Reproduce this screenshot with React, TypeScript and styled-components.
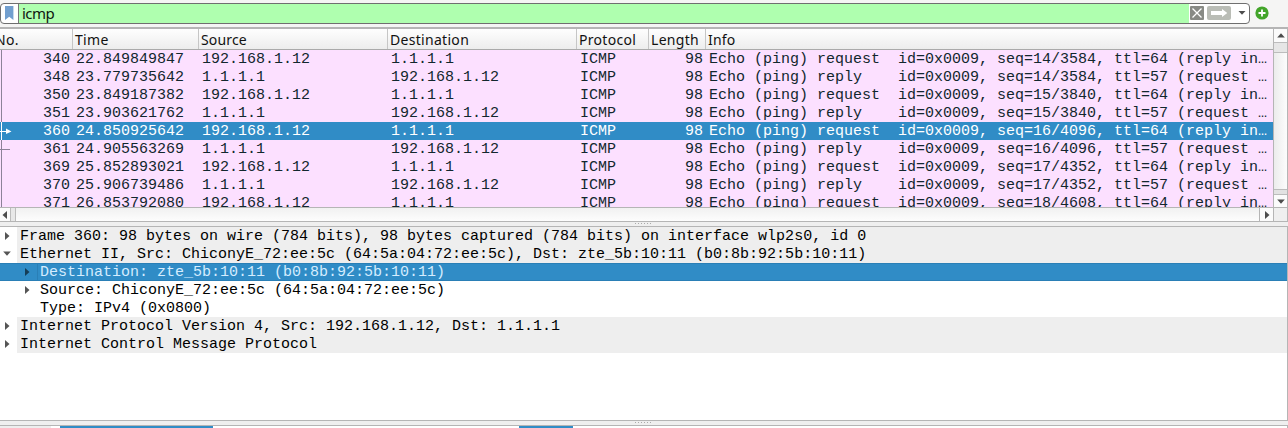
import React from "react";
import styled, { createGlobalStyle, css } from "styled-components";

const Global = createGlobalStyle`
  * { box-sizing: border-box; }
  html, body { margin: 0; padding: 0; overflow: hidden; background: #efefef; }
`;

const mono = css`
  font-family: "Liberation Mono", monospace;
  font-size: 15px;
  line-height: 20px;
  white-space: pre;
`;

const Window = styled.div`
  width: 1288px;
  height: 428px;
  display: flex;
  flex-direction: column;
  overflow: hidden;
  background: #efefef;
`;

const FilterBar = styled.div`
  display: flex;
  flex: none;
  height: 27px;
  padding-top: 3px;
  background: #f5f5f4;
`;

const FilterField = styled.div`
  display: flex;
  width: 1250px;
  height: 21px;
  border: 1px solid #6f6f6f;
  border-radius: 4px;
  background: #fff;
  overflow: hidden;
`;

const Bookmark = styled.div`
  width: 18px;
  border-right: 1px solid #777;
  padding: 2px 0 0 4px;
  line-height: 0;
`;

const FilterText = styled.div`
  flex: 1;
  background: #afffaf;
  padding-left: 3px;
  font: 15px/19px "Noto Sans", sans-serif;
  letter-spacing: -0.55px;
  color: #101810;
`;

const FieldActions = styled.div`
  display: flex;
  width: 60px;
  padding-top: 2px;
`;

const AddButton = styled.div`
  padding: 3px 0 0 5px;
  line-height: 0;
`;

const PacketPane = styled.div`
  display: flex;
  flex-direction: column;
  flex: none;
  height: 195px;
  border-top: 2px solid #b5b5b5;
  border-right: 1px solid #b5b5b5;
  border-bottom: 1px solid #b5b5b5;
`;

const PacketBody = styled.div`
  display: flex;
  height: 178px;
`;

const PacketTable = styled.div`
  display: flex;
  flex-direction: column;
  width: 1273px;
  overflow: hidden;
`;

const columns = "73px 126px 189px 189px 72px 57px 567px";

const HeaderRow = styled.div`
  display: grid;
  flex: none;
  grid-template-columns: ${columns};
  height: 21px;
  background: linear-gradient(#fefefe, #ededed);
  border-bottom: 1px solid #aaa;
`;

const HeaderCell = styled.div<{ $shift?: number; $spacing?: number; $last?: boolean }>`
  padding-left: 2px;
  text-indent: ${(p) => p.$shift ?? 0}px;
  letter-spacing: ${(p) => p.$spacing ?? 0.3}px;
  border-right: ${(p) => (p.$last ? "0" : "1px solid #c6c6c6")};
  font: 14px/21px "Noto Sans", sans-serif;
  color: #111;
  white-space: nowrap;
  overflow: hidden;
`;

const Rows = styled.div`
  height: 157px;
  overflow: hidden;
`;

const PacketRow = styled.div<{ $selected: boolean }>`
  ${mono}
  position: relative;
  display: grid;
  grid-template-columns: ${columns};
  height: 18px;
  color: ${(p) => (p.$selected ? "#fff" : "#12272e")};
  background: ${(p) => (p.$selected ? "#308cc6" : "#fce0ff")};
`;

const Cell = styled.div<{ $right?: boolean }>`
  height: 18px;
  padding: 0 3px;
  text-align: ${(p) => (p.$right ? "right" : "left")};
`;

const Relation = styled.svg`
  position: absolute;
  left: 0;
  top: 0;
`;

const VerticalScroll = styled.div`
  display: flex;
  flex-direction: column;
  width: 14px;
  border-left: 1px solid #b5b5b5;
  background: linear-gradient(90deg, #ececec, #fcfcfc);
`;

const StepButton = styled.div<{ $w: number; $h: number }>`
  display: flex;
  flex: none;
  align-items: center;
  justify-content: center;
  width: ${(p) => p.$w}px;
  height: ${(p) => p.$h}px;
  background: #fbfbfb;
`;

const Thumb = styled.div`
  height: 11px;
  border: solid #bcbcbc;
  border-width: 1px 0;
  background: #e6e6e6;
`;

const Track = styled.div`
  flex: 1;
`;

const TrackEnd = styled.div`
  height: 6px;
  border: solid #bcbcbc;
  border-width: 1px 0;
  background: #e2e2e2;
`;

const HorizontalScroll = styled.div`
  display: flex;
  height: 14px;
  border-top: 1px solid #b5b5b5;
  background: linear-gradient(#f1f1f1, #fdfdfd);
`;

const HorizontalThumb = styled.div`
  width: 6px;
  border: solid #bcbcbc;
  border-width: 0 1px;
  background: #e8e8e8;
`;

const Corner = styled.div`
  width: 14px;
  border-left: 1px solid #b5b5b5;
  background: #efefef;
`;

const RightStep = styled.div`
  display: flex;
  border-left: 1px solid #b5b5b5;
`;

const Splitter = styled.div`
  display: flex;
  flex: none;
  justify-content: center;
  gap: 2px;
  height: 4px;
  padding: 1px 2px 0 0;
  background: #efefef;
`;

const Dot = styled.i`
  width: 1px;
  height: 1px;
  background: #aaa;
`;

const DetailPane = styled.div`
  flex: none;
  height: 195px;
  border: solid #b5b5b5;
  border-width: 1px 1px 1px 0;
  background: #fff;
`;

const DetailRow = styled.div<{ $selected?: boolean }>`
  ${mono}
  display: flex;
  height: 18px;
  color: ${(p) => (p.$selected ? "#d5edff" : "#000")};
  background: ${(p) => (p.$selected ? "#308cc6" : "#fff")};
  box-shadow: ${(p) => (p.$selected ? "inset 0 1px #2a7fb6, inset 0 -1px #2a7fb6" : "none")};
`;

const Twisty = styled.div<{ $depth: number; $open?: boolean }>`
  width: ${(p) => 17 + p.$depth * 20}px;
  padding: ${(p) => (p.$open ? 4 : 5)}px 0 0 ${(p) => p.$depth * 20 + 3}px;
  line-height: 0;
`;

const DetailText = styled.div<{ $shade?: boolean; $selected?: boolean }>`
  flex: 1;
  padding-left: ${(p) => (p.$selected ? 2 : 3)}px;
  background: ${(p) => (p.$shade ? "#eee" : "transparent")};
  border-left: ${(p) => (p.$selected ? "1px solid #2a7fb6" : "0")};
`;

const BytesPane = styled.div`
  display: flex;
  flex: none;
  height: 3px;
  border-top: 1px solid #b5b5b5;
  border-right: 1px solid #b5b5b5;
  background: #fff;
`;

const ByteSpan = styled.div<{ $w: number; $color?: string }>`
  width: ${(p) => p.$w}px;
  background: ${(p) => p.$color ?? "transparent"};
`;

type Direction = "up" | "down" | "left" | "right";
const triangles: Record<Direction, string> = {
  up: "M0.2 5.5L4 1.2L7.8 5.5Z",
  down: "M0.2 2.5L4 6.8L7.8 2.5Z",
  left: "M6 0L1.5 4L6 8Z",
  right: "M2 0L6.5 4L2 8Z",
};
const Triangle = ({ dir, color = "#4c4c4c" }: { dir: Direction; color?: string }) => (
  <svg width="8" height="8" viewBox="0 0 8 8">
    <path d={triangles[dir]} fill={color} />
  </svg>
);

const Grip = () => (
  <Splitter>
    {[0, 1, 2, 3, 4, 5].map((i) => (
      <Dot key={i} />
    ))}
  </Splitter>
);

const packets: [number, string, boolean, string][] = [
  [340, "22.849849847", true, "14/3584"],
  [348, "23.779735642", false, "14/3584"],
  [350, "23.849187382", true, "15/3840"],
  [351, "23.903621762", false, "15/3840"],
  [360, "24.850925642", true, "16/4096"],
  [361, "24.905563269", false, "16/4096"],
  [369, "25.852893021", true, "17/4352"],
  [370, "25.906739486", false, "17/4352"],
  [371, "26.853792080", true, "18/4608"],
];

const details: { text: string; depth: number; open?: boolean; leaf?: boolean; selected?: boolean }[] = [
  { text: "Frame 360: 98 bytes on wire (784 bits), 98 bytes captured (784 bits) on interface wlp2s0, id 0", depth: 0 },
  { text: "Ethernet II, Src: ChiconyE_72:ee:5c (64:5a:04:72:ee:5c), Dst: zte_5b:10:11 (b0:8b:92:5b:10:11)", depth: 0, open: true },
  { text: "Destination: zte_5b:10:11 (b0:8b:92:5b:10:11)", depth: 1, selected: true },
  { text: "Source: ChiconyE_72:ee:5c (64:5a:04:72:ee:5c)", depth: 1 },
  { text: "Type: IPv4 (0x0800)", depth: 1, leaf: true },
  { text: "Internet Protocol Version 4, Src: 192.168.1.12, Dst: 1.1.1.1", depth: 0 },
  { text: "Internet Control Message Protocol", depth: 0 },
];

export default function App() {
  return (
    <Window>
      <Global />
      <FilterBar>
        <FilterField>
          <Bookmark>
            <svg width="9" height="15" viewBox="0 0 9 15">
              <path d="M0 0H8.4V14L4.2 10.7L0 14Z" fill="#729fcf" />
            </svg>
          </Bookmark>
          <FilterText>icmp</FilterText>
          <FieldActions>
            <svg width="58" height="15" viewBox="0 0 58 15">
              <rect x="1" y="0" width="14" height="14" rx="1" fill="#888a85" />
              <path d="M3.5 2.5L12.5 11.5M12.5 2.5L3.5 11.5" stroke="#fff" strokeWidth="1.3" />
              <rect x="18" y="0" width="24" height="14" rx="2" fill="#babdb6" />
              <path d="M22 5H33V3L38.3 7L33 11V9H22Z" fill="#fff" />
              <path d="M49.5 5H56.5L53 8.8Z" fill="#4c4c4c" />
            </svg>
          </FieldActions>
        </FilterField>
        <AddButton>
          <svg width="14" height="14" viewBox="0 0 14 14">
            <circle cx="7" cy="7" r="6.6" fill="#43a52a" />
            <path d="M7 3.5V10.5M3.5 7H10.5" stroke="#fff" strokeWidth="1.8" />
          </svg>
        </AddButton>
      </FilterBar>

      <PacketPane>
        <PacketBody>
          <PacketTable>
            <HeaderRow>
              <HeaderCell $shift={-7}>No.</HeaderCell>
              <HeaderCell>Time</HeaderCell>
              <HeaderCell $spacing={0.15}>Source</HeaderCell>
              <HeaderCell>Destination</HeaderCell>
              <HeaderCell>Protocol</HeaderCell>
              <HeaderCell>Length</HeaderCell>
              <HeaderCell $spacing={0.15} $last>
                Info
              </HeaderCell>
            </HeaderRow>
            <Rows>
              {packets.map(([no, time, request, seq]) => {
                const selected = no === 360;
                const line = selected ? "#fff" : "#8c8298";
                return (
                  <PacketRow key={no} $selected={selected}>
                    <Cell $right>{no}</Cell>
                    <Cell>{time}</Cell>
                    <Cell>{request ? "192.168.1.12" : "1.1.1.1"}</Cell>
                    <Cell>{request ? "1.1.1.1" : "192.168.1.12"}</Cell>
                    <Cell>ICMP</Cell>
                    <Cell $right>98</Cell>
                    <Cell>
                      {`Echo (ping) ${request ? "request" : "reply  "}  id=0x0009, seq=${seq}, ttl=${
                        request ? "64 (reply in…" : "57 (request …"
                      }`}
                    </Cell>
                    <Relation width="12" height="18" viewBox="0 0 12 18">
                      <path d="M1.5 0V18" stroke={line} />
                      {selected && <path d="M0 9H6V6.5L11.5 9.5L6 12V10H0Z" fill="#fff" />}
                      {no === 361 && <path d="M0 9.5H10" stroke={line} />}
                    </Relation>
                  </PacketRow>
                );
              })}
            </Rows>
          </PacketTable>
          <VerticalScroll>
            <StepButton $w={13} $h={13}>
              <Triangle dir="up" />
            </StepButton>
            <Thumb />
            <Track />
            <TrackEnd />
            <StepButton $w={13} $h={12}>
              <Triangle dir="down" />
            </StepButton>
          </VerticalScroll>
        </PacketBody>
        <HorizontalScroll>
          <StepButton $w={10} $h={13}>
            <Triangle dir="left" />
          </StepButton>
          <HorizontalThumb />
          <Track />
          <RightStep>
            <StepButton $w={13} $h={13}>
              <Triangle dir="right" />
            </StepButton>
          </RightStep>
          <Corner />
        </HorizontalScroll>
      </PacketPane>

      <Grip />

      <DetailPane>
        {details.map((d) => (
          <DetailRow key={d.text} $selected={d.selected}>
            <Twisty $depth={d.depth} $open={d.open}>
              {!d.leaf && <Triangle dir={d.open ? "down" : "right"} color={d.selected ? "#153d57" : "#555"} />}
            </Twisty>
            <DetailText $shade={d.depth === 0} $selected={d.selected}>
              {d.text}
            </DetailText>
          </DetailRow>
        ))}
      </DetailPane>

      <Grip />

      <BytesPane>
        <ByteSpan $w={51} $color="#eee" />
        <ByteSpan $w={9} />
        <ByteSpan $w={153} $color="#308cc6" />
        <ByteSpan $w={306} />
        <ByteSpan $w={54} $color="#308cc6" />
      </BytesPane>
    </Window>
  );
}
